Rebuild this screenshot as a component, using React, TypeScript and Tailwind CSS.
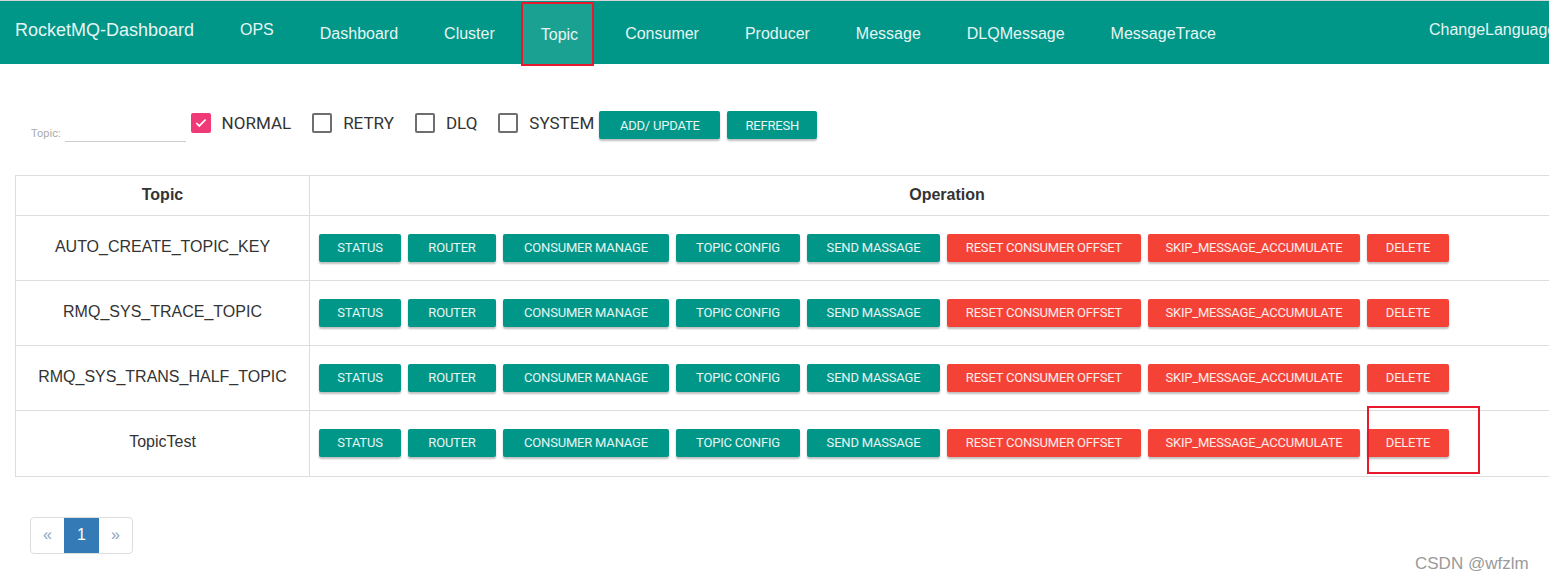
import React from 'react';

const navItems = ['Dashboard', 'Cluster', 'Topic', 'Consumer', 'Producer', 'Message', 'DLQMessage', 'MessageTrace'];

const topics = ['AUTO_CREATE_TOPIC_KEY', 'RMQ_SYS_TRACE_TOPIC', 'RMQ_SYS_TRANS_HALF_TOPIC', 'TopicTest'];

const ops = [
  { label: 'STATUS', w: 'w-[82px]', red: false },
  { label: 'ROUTER', w: 'w-[88px]', red: false },
  { label: 'CONSUMER MANAGE', w: 'w-[166px]', red: false },
  { label: 'TOPIC CONFIG', w: 'w-[124px]', red: false },
  { label: 'SEND MASSAGE', w: 'w-[133px]', red: false },
  { label: 'RESET CONSUMER OFFSET', w: 'w-[194px]', red: true },
  { label: 'SKIP_MESSAGE_ACCUMULATE', w: 'w-[212px]', red: true },
  { label: 'DELETE', w: 'w-[82px]', red: true },
];

function Btn({ label, w, red }: { label: string; w: string; red?: boolean }) {
  return (
    <button
      className={`${w} h-[28px] shrink-0 whitespace-nowrap rounded-[2px] text-[13px] font-normal tracking-[-0.2px] text-white/90 shadow-[0_2px_2px_rgba(0,0,0,0.25)] ${
        red ? 'bg-[#f44336]' : 'bg-[#009688]'
      }`}
      style={{ fontFamily: 'Roboto, sans-serif' }}
    >
      {label}
    </button>
  );
}

function Check({ label, checked }: { label: string; checked?: boolean }) {
  return (
    <label className="flex items-center gap-[11px] text-[17px] text-[#333]" style={{ fontFamily: 'Roboto, sans-serif' }}>
      {checked ? (
        <span className="flex h-[20px] w-[20px] items-center justify-center rounded-[2px] bg-[#f03a78]">
          <svg width="14" height="14" viewBox="0 0 24 24" fill="none" stroke="white" strokeWidth="3">
            <path d="M4 12l5 5L20 6" />
          </svg>
        </span>
      ) : (
        <span className="h-[20px] w-[20px] rounded-[2px] border-2 border-[#6e6e6e]" />
      )}
      <span>{label}</span>
    </label>
  );
}

export default function App() {
  return (
    <div className="relative h-[579px] w-[1549px] overflow-hidden bg-white" style={{ fontFamily: '"Liberation Sans", Arial, sans-serif' }}>
      {/* Navbar */}
      <nav className="flex h-[64px] items-stretch border-t border-[#d5d5d5] bg-[#009688] text-[16px] text-[#e6f5f3]">
        <div className="flex items-center pb-[4px] pl-[15px] text-[18px] w-[217px] shrink-0">RocketMQ-Dashboard</div>
        <div className="flex items-center pb-[6px] px-[23px]">OPS</div>
        {navItems.map((n) =>
          n === 'Topic' ? (
            <div key={n} className="relative mt-[3px] ml-[5px] mr-[10px] flex items-center bg-[#1ba191] pl-[18px] pr-[14px] pt-[1px] outline-2 outline-[#e8192c]">
              {n}
            </div>
          ) : (
            <div key={n} className="flex items-center px-[23px] pt-[2px]">
              {n}
            </div>
          ),
        )}
        <div className="flex-1" />
        <div className="flex w-[120px] shrink-0 items-center overflow-hidden whitespace-nowrap pb-[6px]">ChangeLanguage</div>
      </nav>

      {/* Filters */}
      <div className="flex items-center pl-[31px] pt-[44px]">
        <div className="flex items-end gap-[4px] pt-[18px]">
          <span className="text-[11px] text-[#aaa]" style={{ fontFamily: 'Roboto, sans-serif' }}>Topic:</span>
          <span className="h-[1px] w-[121px] bg-[#ccc] mb-[1px]" />
        </div>
        <div className="ml-[5px] flex items-center gap-[21px] pb-[4px]">
          <Check label="NORMAL" checked />
          <Check label="RETRY" />
          <Check label="DLQ" />
          <Check label="SYSTEM" />
        </div>
        <div className="ml-[5px] flex gap-[7px]">
          <Btn label="ADD/ UPDATE" w="w-[121px]" />
          <Btn label="REFRESH" w="w-[90px]" />
        </div>
      </div>

      {/* Table */}
      <div className="ml-[15px] mt-[32px] w-[1570px] border border-[#ddd] text-[#333]">
        <div className="flex h-[40px] border-b border-[#ddd] font-bold text-[16px]">
          <div className="flex w-[294px] items-center justify-center border-r border-[#ddd]">Topic</div>
          <div className="flex flex-1 items-center justify-center">Operation</div>
        </div>
        {topics.map((t, i) => (
          <div key={t} className={`flex h-[65px] ${i < topics.length - 1 ? 'border-b border-[#ddd]' : ''}`}>
            <div className="flex w-[294px] items-center justify-center border-r border-[#ddd] pb-[2px] text-[16px]">{t}</div>
            <div className="relative flex flex-1 items-center gap-[7px] pl-[9px]">
              {ops.map((o) => (
                <Btn key={o.label} label={o.label} w={o.w} red={o.red} />
              ))}
              {i === topics.length - 1 && (
                <div className="absolute left-[1057px] top-[-5px] h-[68px] w-[113px] border-2 border-[#e8192c]" />
              )}
            </div>
          </div>
        ))}
      </div>

      {/* Pagination */}
      <div className="ml-[30px] mt-[40px] flex h-[37px] w-[103px] overflow-hidden rounded-[4px] border border-[#ddd] text-[16px]">
        <div className="flex w-[33px] items-center justify-center text-[#8aa4c0]">«</div>
        <div className="flex w-[35px] items-center justify-center bg-[#337ab7] text-white">1</div>
        <div className="flex flex-1 items-center justify-center text-[#8aa4c0]">»</div>
      </div>

      <div className="absolute left-[1415px] top-[551px] text-[17px] text-[#9a9a9a]">CSDN @wfzlm</div>
    </div>
  );
}
